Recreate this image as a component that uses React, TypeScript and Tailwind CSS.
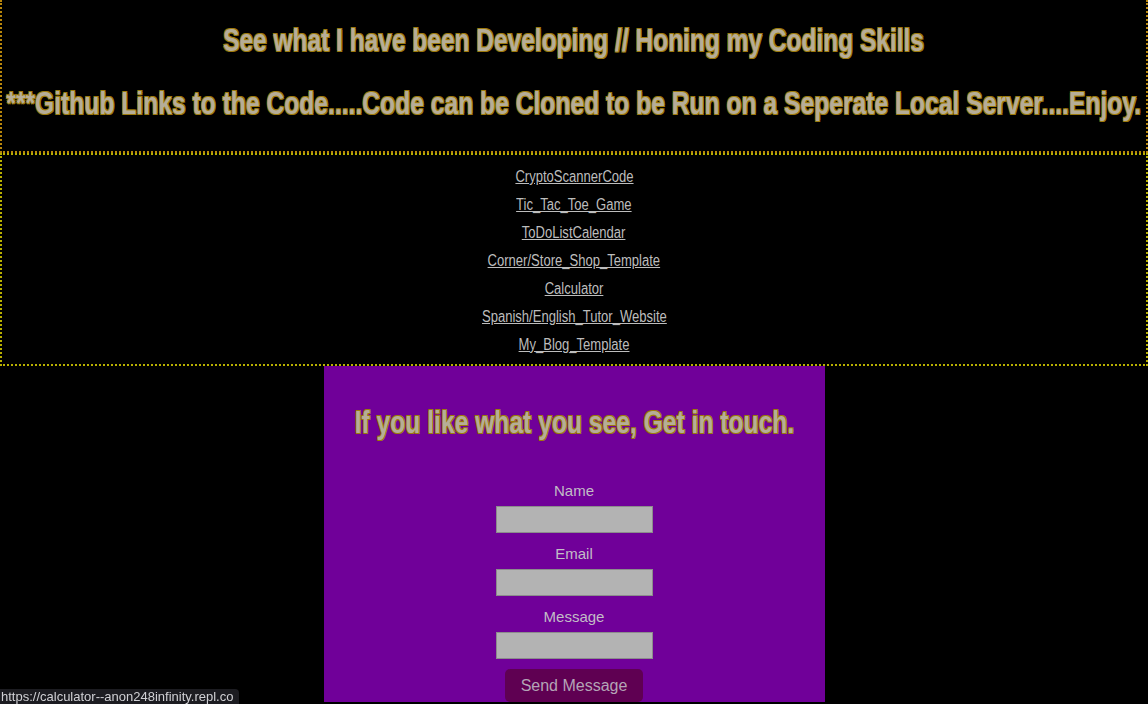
const links = [
  "CryptoScannerCode",
  "Tic_Tac_Toe_Game",
  "ToDoListCalendar",
  "Corner/Store_Shop_Template",
  "Calculator",
  "Spanish/English_Tutor_Website",
  "My_Blog_Template",
]

// gold outline around the grey heading text
const glow =
  "[text-shadow:1px_1px_0_#9c7a0c,-1px_-1px_0_#9c7a0c,1px_-1px_0_#9c7a0c,-1px_1px_0_#9c7a0c]"

export default function App() {
  return (
    <div className="min-h-[704px] overflow-hidden bg-black font-['Liberation_Sans',Arial,sans-serif]">
      {/* Intro */}
      <section className="flex flex-col items-center overflow-hidden border-x-2 border-b-2 border-dotted border-[#b8860b] pt-[22px] pb-[29px]">
        <h1 className={`scale-x-[0.79] text-[31px] leading-[37px] font-bold whitespace-nowrap text-[#b6ad98] ${glow}`}>
          See what I have been Developing // Honing my Coding Skills
        </h1>
        <h1 className={`mt-[26px] scale-x-[0.795] text-[31px] leading-[37px] font-bold whitespace-nowrap text-[#b6ad98] ${glow}`}>
          ***Github Links to the Code.....Code can be Cloned to be Run on a Seperate Local Server....Enjoy.
        </h1>
      </section>

      {/* Links */}
      <section className="flex flex-col items-center border-2 border-dotted border-[#b8b000] pt-[8px] pb-[5px]">
        {links.map((l) => (
          <a
            key={l}
            href="#"
            className="flex h-[28px] scale-x-[0.815] items-center text-[16px] whitespace-nowrap text-[#bdbdbd] underline"
          >
            {l}
          </a>
        ))}
      </section>

      {/* Contact */}
      <section className="mx-auto flex h-[336px] w-[501px] flex-col items-center bg-[#700099] pt-[38px]">
        <h2 className={`scale-x-[0.795] text-[31px] leading-[37px] font-bold whitespace-nowrap text-[#b6ad98] ${glow}`}>
          If you like what you see, Get in touch.
        </h2>
        <form className="mt-[41px] flex flex-col items-center">
          {["Name", "Email", "Message"].map((f, i) => (
            <div key={f} className={`flex flex-col items-center ${i > 0 ? "mt-[12px]" : ""}`}>
              <label className="text-[15px] leading-[18px] text-[#c2bcc6]">{f}</label>
              <input
                type="text"
                className="mt-[6px] h-[27px] w-[157px] border border-[#8c8c8c] bg-[#b3b3b3] outline-none"
              />
            </div>
          ))}
          <button
            type="button"
            className="mt-[10px] h-[33px] w-[138px] rounded-[5px] bg-[#5f0052] text-[16px] text-[#b4a4b6]"
          >
            Send Message
          </button>
        </form>
      </section>

      {/* Browser hover status */}
      <div className="fixed bottom-0 left-0 rounded-tr-[4px] bg-[#1c1c21] pt-[1px] pr-[6px] pl-[1px] text-[13px] leading-[14px] text-[#d0d0d4]">
        https://calculator--anon248infinity.repl.co
      </div>
    </div>
  )
}
